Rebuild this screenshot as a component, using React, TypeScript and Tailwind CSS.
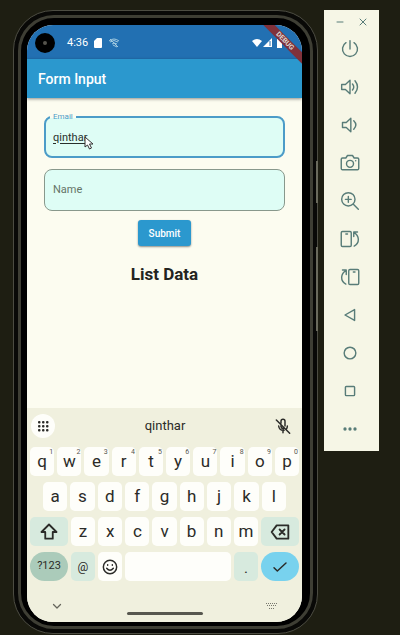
import React, { useState } from "react";

type IconProps = { children: React.ReactNode; className?: string; box?: string };

function Icon({ children, className = "size-5", box = "0 0 24 24" }: IconProps) {
  return (
    <svg
      viewBox={box}
      className={className}
      fill="none"
      stroke="currentColor"
      strokeWidth="1.7"
      strokeLinecap="round"
      strokeLinejoin="round"
      aria-hidden="true"
    >
      {children}
    </svg>
  );
}

const tools = [
  { label: "Power", icon: <><path d="M12 2v10" /><path d="M7.2 4.4a9 9 0 1 0 9.6 0" /></> },
  { label: "Volume up", icon: <><path d="M2 9h4.500l5.500-5v16l-5.500-5H2z" /><path d="M15 8.500q3 3.500 0 7M18 4.500q6 7.500 0 15" /></> },
  { label: "Volume down", icon: <><path d="M3 9h4.500l5.500-5v16l-5.500-5H3z" /><path d="M16.500 7q5 5 0 10" /></> },
  { label: "Take screenshot", icon: <><path d="M3 6h4l2-3h6l2 3h4q1.500 0 1.500 1.500v11q0 1.500-1.500 1.500H3q-1.500 0-1.500-1.500v-11Q1.500 6 3 6z" /><circle cx="12" cy="13" r="4.200" /><path d="M18.800 9.300h.1" /></> },
  { label: "Zoom", icon: <><circle cx="10" cy="10" r="8" /><path d="m16 16 6 6M10 6.500v7M6.500 10h7" /></> },
  { label: "Rotate left", icon: <><rect x="1.500" y="3" width="12" height="18" rx="1.500" /><path d="M7 6h2M17 20.500c7-4 6.500-12.500-.5-16.500M16.500 9V3.500H21" /></> },
  { label: "Rotate right", icon: <><rect x="10.500" y="3" width="12" height="18" rx="1.500" /><path d="M16 6h2M7 20.500C0 16.500.5 8 7.500 4M7.500 9V3.500H3" /></> },
  { label: "Back", icon: <path d="M17.500 5.500v13L6 12z" /> },
  { label: "Home", icon: <circle cx="12" cy="12" r="7" /> },
  { label: "Overview", icon: <rect x="6.500" y="6.500" width="11" height="11" rx="1" /> },
  {
    label: "More",
    icon: <g fill="currentColor" stroke="none"><circle cx="6" cy="12" r="2" /><circle cx="12" cy="12" r="2" /><circle cx="18" cy="12" r="2" /></g>,
  },
];

function Toolbar() {
  return (
    <aside className="w-[55px] shrink-0 self-start bg-[#f6f6e6] pr-[3px] pb-[3px] text-[#587c78]">
      <div className="flex h-5 items-center justify-between pt-1 pr-[9px] pl-3">
        <button aria-label="Minimize"><Icon className="size-2"><path d="M3 12h18" strokeWidth="3" /></Icon></button>
        <button aria-label="Close"><Icon className="size-2"><path d="m3 3 18 18M21 3 3 21" strokeWidth="3" /></Icon></button>
      </div>
      {tools.map((tool) => (
        <button key={tool.label} aria-label={tool.label} className="flex h-[38px] w-full items-center justify-center">
          <Icon>{tool.icon}</Icon>
        </button>
      ))}
    </aside>
  );
}

function StatusBar() {
  return (
    <div className="flex h-[34px] items-center bg-[#2270b2] pt-[2px] pr-[18px] pl-2 text-white">
      <span className="flex size-5 items-center justify-center rounded-full bg-black">
        <span className="size-1 rounded-full bg-[#55534c]" />
      </span>
      <span className="ml-3 text-[11px]">4:36</span>
      <svg viewBox="0 0 8 10" className="ml-[6px] h-[10px] w-2" fill="currentColor" aria-hidden="true">
        <path d="M3 0h4q1 0 1 1v8q0 1-1 1H1q-1 0-1-1V3z" />
      </svg>
      <svg viewBox="0 0 12 10" className="ml-[6px] h-[10px] w-3" fill="none" stroke="#a3cbe0" aria-hidden="true">
        <path d="M1 3q5-4 10 0M2 4q4-3 8 0M4 6q2-2 5 0M5 7l4 2M2 1l8 8" />
      </svg>
      <span className="flex-1" />
      <svg viewBox="0 0 32 10" className="h-[10px] w-8" fill="currentColor" aria-hidden="true">
        <path d="M0 3q5-4 10 0L5 9z" />
        <path d="M20 0v9h-9z" />
        <path d="M18 3v5" stroke="#2270b2" />
        <path d="M25 1h1V0h3v1h1v9h-5z" />
      </svg>
    </div>
  );
}

function Field({ label, value, onChange, active }: { label: string; value: string; onChange: (v: string) => void; active: boolean }) {
  const id = label.toLowerCase();
  return (
    <div className="relative">
      <input
        id={id}
        value={value}
        spellCheck={false}
        onChange={(e) => onChange(e.target.value)}
        className={
          active
            ? "block h-[42px] w-full rounded-lg border-2 border-[#4c9cc8] bg-[#defdf5] px-[7px] text-[11px] text-[#28302c] underline underline-offset-2 outline-none"
            : "block h-[42px] w-full rounded-lg border border-[#88988c] bg-[#defdf5] px-2 text-[11px] text-[#28302c] outline-none"
        }
      />
      {active ? (
        <label htmlFor={id} className="absolute -top-1 left-[6px] bg-linear-to-b from-[#fcfcf0] from-60% to-[#defdf5] to-60% px-[3px] text-[8px] leading-[10px] text-[#4c9cc8]">
          {label}
        </label>
      ) : (
        <label htmlFor={id} className="absolute inset-y-0 left-[9px] flex items-center text-[11px] text-[#657467]">
          {label}
        </label>
      )}
    </div>
  );
}

function Key({ letter, hint }: { letter: string; hint?: string }) {
  return (
    <button className="relative h-[29px] min-w-0 flex-1 rounded-[5px] bg-[#fefefa] pb-px text-[17px] leading-none text-[#2b2b28]">
      {letter}
      {hint && <span className="absolute top-px right-px text-[7px] leading-[8px] text-[#55554f]">{hint}</span>}
    </button>
  );
}

function Keyboard() {
  return (
    <section aria-label="Keyboard" className="bg-[#f0f0de] px-[3px] text-[#2b2b28]">
      <div className="mb-1 flex h-[35px] items-center justify-between pr-2 pl-px">
        <button aria-label="Keyboard menu" className="flex size-6 items-center justify-center rounded-full bg-[#fefefa]">
          <svg viewBox="0 0 12 12" className="size-3" fill="currentColor" aria-hidden="true">
            {[1, 5, 9].map((x) => [1, 5, 9].map((y) => <rect key={`${x}-${y}`} x={x} y={y} width="2.500" height="2.500" rx="1" />))}
          </svg>
        </button>
        <button className="text-[13px]">qinthar</button>
        <button aria-label="Voice input off">
          <Icon className="size-4"><path strokeWidth="2.200" d="M2 3l20 20M9 8V5a3 3 0 0 1 6 0v7M9 11v2q1 3 4 3M5.500 12q1 7 8 6.500M18.500 12q0 2-1 4M12 19v3" /></Icon>
        </button>
      </div>
      <div className="flex flex-col gap-[6px]">
        <div className="flex gap-[3px]">
          {"qwertyuiop".split("").map((k, i) => <Key key={k} letter={k} hint={String((i + 1) % 10)} />)}
        </div>
        <div className="flex gap-[3px] px-[13px]">
          {"asdfghjkl".split("").map((k) => <Key key={k} letter={k} />)}
        </div>
        <div className="flex gap-[3px]">
          <button aria-label="Shift" className="flex h-[29px] w-[38px] items-center justify-center rounded-[5px] bg-[#d7eade]">
            <Icon><path d="M12 3l9 9h-4.500v8h-9v-8H3z" strokeWidth="2.200" /></Icon>
          </button>
          {"zxcvbnm".split("").map((k) => <Key key={k} letter={k} />)}
          <button aria-label="Backspace" className="flex h-[29px] w-[38px] items-center justify-center rounded-[5px] bg-[#d7eade]">
            <Icon><path d="M8 4h14v16H8l-6-8zM11.500 9l6 6M17.500 9l-6 6" strokeWidth="2.200" /></Icon>
          </button>
        </div>
        <div className="flex h-[29px] gap-[3px]">
          <button className="w-[38px] rounded-full bg-[#abcbba] text-[11px]">?123</button>
          <button className="w-[24px] rounded-[5px] bg-[#d7eade] text-[12px]">@</button>
          <button aria-label="Emoji" className="flex w-[24px] items-center justify-center rounded-[5px] bg-[#fefefa]">
            <Icon className="size-4"><g strokeWidth="2.200"><circle cx="12" cy="12" r="10" /><path d="M7 14q5 6 10 0M8.500 8.500v1M15.500 8.500v1" /></g></Icon>
          </button>
          <button aria-label="Space" className="flex-1 rounded-[5px] bg-[#fefefa]" />
          <button className="w-[24px] rounded-[5px] bg-[#d7eade] pt-1 text-[15px]">.</button>
          <button aria-label="Done" className="flex w-[38px] items-center justify-center rounded-full bg-[#78d2ee]">
            <Icon className="size-4"><path d="m3 13 5 5L21 6" strokeWidth="2.200" /></Icon>
          </button>
        </div>
      </div>
      <div className="flex h-[41px] items-center justify-between px-[21px] pt-2">
        <button aria-label="Hide keyboard" className="text-[#66665c]"><Icon className="size-3"><path d="m5 9 7 7 7-7" strokeWidth="2.500" /></Icon></button>
        <span className="mt-4 h-[3px] w-[76px] rounded-full bg-[#57574f]" />
        <button aria-label="Switch keyboard">
          <svg viewBox="0 0 12 8" className="h-2 w-3" stroke="#77776d" strokeDasharray="1 1" aria-hidden="true">
            <path d="M0 1.500h12M1 3.500h10M3 6.500h6" />
          </svg>
        </button>
      </div>
    </section>
  );
}

export default function App() {
  const [email, setEmail] = useState("qinthar");
  const [name, setName] = useState("");
  return (
    <div className="flex min-h-screen gap-[6px] bg-[#1e1e12] pt-[10px] pr-[21px] pb-px pl-[13px] font-[Roboto,sans-serif]">
      <div className="relative flex min-w-0 flex-1 rounded-[40px] border border-[#4c4c42] bg-[#090907] p-1">
        <div className="flex min-w-0 flex-1 rounded-[36px] border-3 border-[#3e3e34] bg-black pt-[7px] pr-2 pb-1 pl-[6px]">
          <main className="relative flex min-w-0 flex-1 flex-col overflow-hidden rounded-[26px] bg-[#fcfcf0]">
            <StatusBar />
            <header className="flex h-[39px] items-center bg-[#2b98ce] pt-px pl-[11px] shadow-[0_1px_3px_#00000070]">
              <h1 className="text-[14px] font-medium text-white">Form Input</h1>
            </header>
            <form className="flex flex-1 flex-col px-[17px] pt-[18px]" onSubmit={(e) => e.preventDefault()}>
              <div className="flex flex-col gap-[11px]">
                <Field label="Email" value={email} onChange={setEmail} active />
                <Field label="Name" value={name} onChange={setName} active={false} />
              </div>
              <button className="mt-[9px] h-[26px] self-center rounded-[3px] bg-[#2b98ce] px-[11px] text-[10px] font-medium text-white shadow-[0_1px_2px_#00000070]">
                Submit
              </button>
              <h2 className="mt-4 text-center text-[17px] leading-6 font-bold text-[#24241f]">List Data</h2>
            </form>
            <Keyboard />
            <span className="absolute top-[12px] -right-[13px] flex h-2 w-[60px] rotate-45 items-center justify-center bg-[#81313a] text-[7px] leading-none font-bold text-[#ded6d0]">
              DEBUG
            </span>
            <svg viewBox="0 0 10 14" className="absolute top-[111px] left-[57px] h-[14px] w-[10px]" fill="white" stroke="#333" aria-hidden="true">
              <path d="M1 1v10l2.500-2 2 4 2-1-2-4H9z" />
            </svg>
          </main>
        </div>
        <span className="absolute top-[150px] -right-px h-[42px] w-[2px] bg-[#6a6a5c]" />
        <span className="absolute top-[236px] -right-px h-[84px] w-[2px] bg-[#6a6a5c]" />
      </div>
      <Toolbar />
    </div>
  );
}
